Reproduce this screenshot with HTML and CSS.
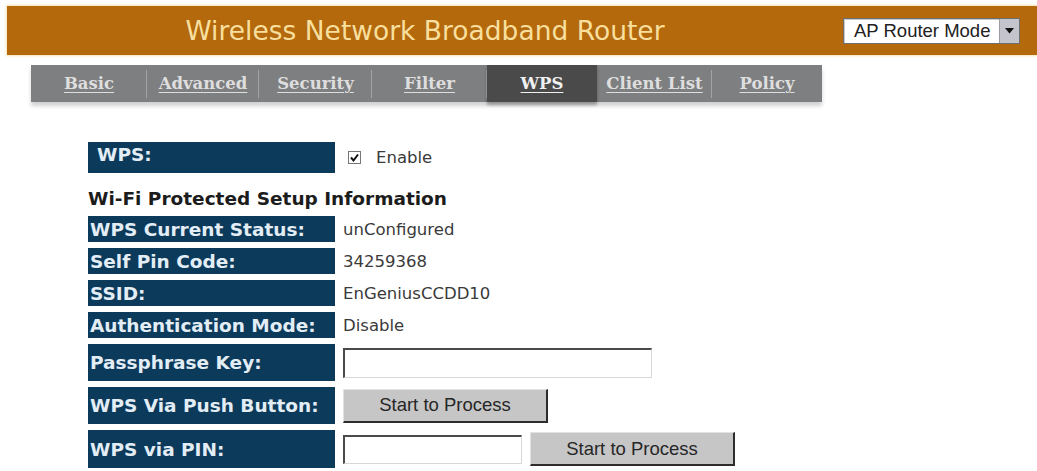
FILE: index.html
```html
<!DOCTYPE html>
<html lang="en">
<head>
    <meta charset="UTF-8">
    <title>Wireless Network Broadband Router</title>
    <link rel="stylesheet" href="styles.css">
</head>
<body>
    <div class="header">
        <div class="title">Wireless Network Broadband Router</div>
        <div class="mode-select">
            <span class="mode-text">AP Router Mode</span>
            <span class="mode-arrow">
                <svg width="9" height="6" viewBox="0 0 9 6"><polygon points="0,0 9,0 4.5,5.5" fill="#111"/></svg>
            </span>
        </div>
    </div>

    <div class="tabs">
        <a class="tab" href="#" style="width:116px">Basic</a>
        <a class="tab" href="#" style="width:112px">Advanced</a>
        <a class="tab" href="#" style="width:113px">Security</a>
        <a class="tab" href="#" style="width:115px">Filter</a>
        <a class="tab active" href="#" style="width:110px">WPS</a>
        <a class="tab" href="#" style="width:115px">Client List</a>
        <a class="tab last" href="#" style="width:110px">Policy</a>
    </div>

    <div class="form">
        <div class="label first">WPS:</div>
        <div class="value">
            <span class="check">
                <svg width="13" height="13" viewBox="0 0 13 13">
                    <rect x="0.5" y="0.5" width="12" height="12" fill="#fff" stroke="#777"/>
                    <polyline points="3,6.5 5.5,9.5 10,3.5" fill="none" stroke="#111" stroke-width="2"/>
                </svg>
            </span>
            Enable
        </div>

        <div class="section-title">Wi-Fi Protected Setup Information</div>

        <div class="label">WPS Current Status:</div>
        <div class="value">unConfigured</div>

        <div class="label">Self Pin Code:</div>
        <div class="value">34259368</div>

        <div class="label">SSID:</div>
        <div class="value">EnGeniusCCDD10</div>

        <div class="label">Authentication Mode:</div>
        <div class="value">Disable</div>

        <div class="label">Passphrase Key:</div>
        <div class="value"><input class="text-input wide" type="text"></div>

        <div class="label">WPS Via Push Button:</div>
        <div class="value"><button class="btn">Start to Process</button></div>

        <div class="label">WPS via PIN:</div>
        <div class="value">
            <input class="text-input pin" type="text">
            <button class="btn">Start to Process</button>
        </div>
    </div>
</body>
</html>
```

FILE: styles.css
```css
body {
    margin: 0;
    background-color: white;
    font-family: "DejaVu Sans", Verdana, sans-serif;
}
.header {
    display: flex;
    align-items: center;
    height: 49px;
    margin: 6px 0 0 7px;
    background-color: #b3690c;
    box-shadow: 0 0 2px 1px #f6e4b4;
}
.title {
    flex: 1;
    text-align: center;
    color: #f8df9e;
    font-size: 26.5px;
}
.mode-select {
    display: flex;
    align-items: stretch;
    width: 175px;
    height: 24px;
    margin-right: 17px;
    background-color: white;
    border: 1px solid #6f6f6f;
    box-shadow: inset 1px 1px 0 #c9c9c9;
}
.mode-text {
    flex: 1;
    font-family: "Liberation Sans", Arial, sans-serif;
    font-size: 18.5px;
    line-height: 24px;
    color: #222;
    padding-left: 10px;
}
.mode-arrow {
    width: 19px;
    display: flex;
    align-items: center;
    justify-content: center;
    background-color: #c3c4cc;
    border-left: 1px solid #9a9aa2;
}
.tabs {
    display: flex;
    width: 791px;
    height: 37px;
    margin: 10px 0 0 31px;
    background-color: #7e7f80;
    box-shadow: 0 4px 4px rgba(0, 0, 0, 0.18);
}
.tab {
    position: relative;
    display: flex;
    align-items: center;
    justify-content: center;
    font-family: "DejaVu Serif", Georgia, serif;
    font-weight: bold;
    font-size: 16.5px;
    color: #dedede;
    text-decoration: underline;
    text-underline-offset: 3px;
}
.tab::after {
    content: "";
    position: absolute;
    right: 0;
    top: 5px;
    bottom: 4px;
    width: 1px;
    background-color: #a2a3a4;
}
.tab.last::after,
.tab.active::after {
    display: none;
}
.tab.active {
    background-color: #4a4a4a;
    color: #f0f0f0;
    box-shadow: 0 3px 3px rgba(0, 0, 0, 0.3);
}
.form {
    display: grid;
    grid-template-columns: 247px 1fr;
    grid-template-rows: 31px 31px 26px 26px 26px 26px 37px 37px 38px;
    column-gap: 8px;
    row-gap: 6px;
    margin: 40px 0 0 88px;
}
.label {
    display: flex;
    align-items: center;
    padding-left: 2px;
    background-color: #0c3a5b;
    color: #e2edf5;
    font-weight: bold;
    font-size: 18.5px;
}
.label.first {
    padding-left: 9px;
    align-items: flex-start;
    padding-top: 2px;
}
.value {
    display: flex;
    align-items: center;
    color: #3a3a3a;
    font-size: 16.5px;
}
.check {
    display: flex;
    margin: 0 15px 0 5px;
}
.section-title {
    grid-column: 1 / 3;
    display: flex;
    align-items: flex-end;
    color: #1c1c1c;
    font-weight: bold;
    font-size: 18.5px;
    line-height: 22px;
}
.text-input {
    box-sizing: border-box;
    height: 30px;
    background-color: white;
    border-top: 2px solid #4a4a4a;
    border-left: 2px solid #4a4a4a;
    border-right: 1px solid #d8d8d8;
    border-bottom: 1px solid #d8d8d8;
    padding: 0;
    margin: 0;
}
.text-input.wide {
    width: 309px;
}
.text-input.pin {
    width: 179px;
    height: 29px;
}
.btn {
    box-sizing: border-box;
    width: 205px;
    height: 34px;
    margin: 0;
    padding: 0;
    background-color: #c6c6c6;
    border-top: 1px solid #e2e2e2;
    border-left: 1px solid #e2e2e2;
    border-right: 2px solid #2d2d2d;
    border-bottom: 2px solid #2d2d2d;
    font-family: "Liberation Sans", Arial, sans-serif;
    font-size: 18.5px;
    color: #262626;
}
.pin + .btn {
    margin-left: 8px;
}
```
